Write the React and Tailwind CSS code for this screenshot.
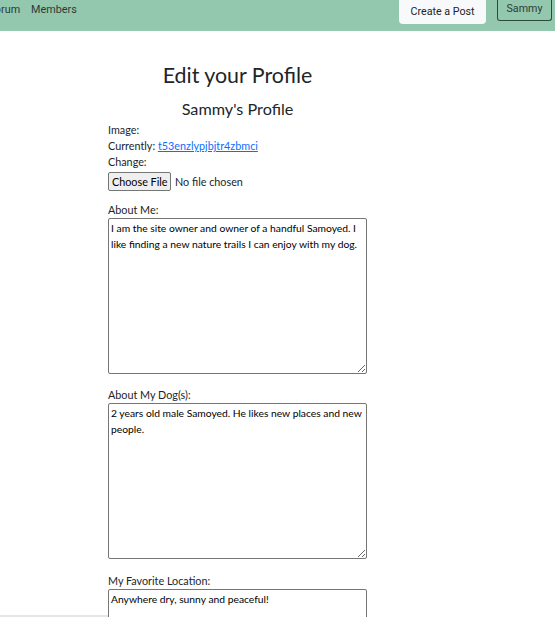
import React from "react";

// Formular zum Bearbeiten des Profils
const felder = [
  {
    label: "About Me:",
    text: "I am the site owner and owner of a handful Samoyed. I like finding a new nature trails I can enjoy with my dog.",
    abstand: "mt-[11px]",
  },
  {
    label: "About My Dog(s):",
    text: "2 years old male Samoyed. He likes new places and new people.",
    abstand: "mt-[13px]",
  },
  {
    label: "My Favorite Location:",
    text: "Anywhere dry, sunny and peaceful!",
    abstand: "mt-[14px]",
  },
];

export default function App() {
  return (
    <div className="min-h-screen bg-white overflow-hidden font-['Lato','Noto_Sans',sans-serif] text-[#212529]">
      {/* Navbar */}
      <nav className="h-[31px] bg-[#93c8ae] flex items-start font-['Roboto',sans-serif]">
        <div className="flex gap-[11px] ml-[-11px] mt-[2px] text-[10.8px] text-[#2f3a35]">
          <span>Forum</span>
          <span>Members</span>
        </div>
        <div className="ml-auto flex items-start gap-[11px] mr-[3px]">
          <button className="w-[87px] h-[24px] bg-[#f8f9fa] rounded-b-[4px] text-[10.7px] text-[#212529] pt-[1px]">
            Create a Post
          </button>
          <button className="w-[55px] h-[21px] border border-[#2d4a3e] rounded-b-[3px] border-t-0 text-[10.7px] text-[#2d3b35] pb-[2px]">
            Sammy
          </button>
        </div>
      </nav>

      <div className="ml-[108px] w-[259px]">
        <h1 className="mt-[31px] text-center text-[21.4px] leading-[26px] whitespace-nowrap">
          Edit your Profile
        </h1>
        <h2 className="mt-[11px] text-center text-[16.2px] leading-[20px] whitespace-nowrap">
          Sammy's Profile
        </h2>

        <div className="mt-[3px] text-[10.8px] leading-[16px]">
          <div>Image:</div>
          <div>
            Currently:{" "}
            <a href="#" className="text-[#0d6efd] underline">
              t53enzlypjbjtr4zbmci
            </a>
          </div>
          <div>Change:</div>
          <input
            type="file"
            className="mt-[2px] block h-[19px] text-[10.8px] file:h-[19px] file:w-[63px] file:px-[3px] file:mr-[4px] file:text-[10.8px] file:border file:border-[#767676] file:rounded-[2px] file:bg-[#efefef] file:text-[#000]"
          />
        </div>

        {felder.map((f) => (
          <div key={f.label} className={f.abstand}>
            <label className="block text-[10.8px] leading-[16px]">{f.label}</label>
            <textarea
              defaultValue={f.text}
              className="block w-[259px] h-[156px] border border-[#767676] rounded-[2px] px-[2px] py-[1px] text-[10.3px] leading-[16px] text-black font-['Lato',sans-serif]"
            />
          </div>
        ))}
      </div>

      {/* schmale graue Leiste unten links */}
      <div className="fixed left-0 bottom-0 w-[108px] h-[2px] bg-[#e6e6e6]" />
    </div>
  );
}
